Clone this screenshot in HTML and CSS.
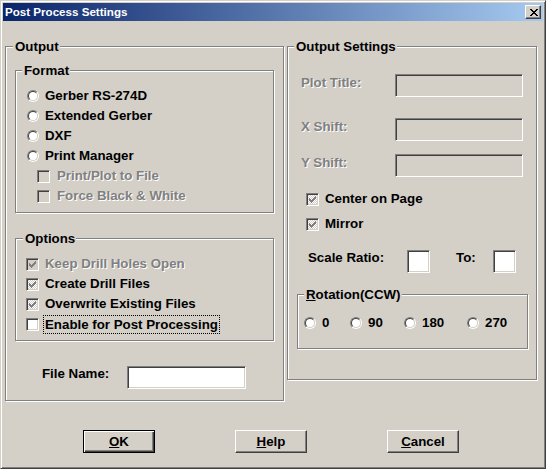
FILE: index.html
```html
<!DOCTYPE html>
<html>
<head>
<meta charset="utf-8">
<title>Post Process Settings</title>
<link rel="stylesheet" href="styles.css">
</head>
<body>
<div class="window">
  <div class="titlebar">
    <span class="title">Post Process Settings</span>
    <span class="close"><svg width="8" height="7" viewBox="0 0 8 7" shape-rendering="crispEdges"><path fill="#000" d="M0 0h2v1H0z M6 0h2v1H6z M1 1h2v1H1z M5 1h2v1H5z M2 2h4v1H2z M3 3h2v1H3z M2 4h4v1H2z M1 5h2v1H1z M5 5h2v1H5z M0 6h2v1H0z M6 6h2v1H6z"/></svg></span>
  </div>
  <div class="content">
    <div class="groups">
      <div class="group output">
        <span class="legend legend-wide">Output</span>
        <div class="group format">
          <span class="legend">Format</span>
          <div class="row"><span class="radio"></span><span>Gerber RS-274D</span></div>
          <div class="row"><span class="radio"></span><span>Extended Gerber</span></div>
          <div class="row"><span class="radio"></span><span>DXF</span></div>
          <div class="row"><span class="radio"></span><span>Print Manager</span></div>
          <div class="row sub"><span class="cb dis"></span><span class="dim">Print/Plot to File</span></div>
          <div class="row sub"><span class="cb dis"></span><span class="dim">Force Black &amp; White</span></div>
        </div>
        <div class="group options">
          <span class="legend legend-wide">Options</span>
          <div class="row"><span class="cb dis"><svg class="check" width="11" height="11" viewBox="0 0 11 11" shape-rendering="crispEdges"><path d="M2 4h1v3H2z M3 5h1v3H3z M4 6h1v3H4z M5 5h1v3H5z M6 4h1v3H6z M7 3h1v3H7z M8 2h1v3H8z"/></svg></span><span class="dim">Keep Drill Holes Open</span></div>
          <div class="row"><span class="cb dither"><svg class="check" width="11" height="11" viewBox="0 0 11 11" shape-rendering="crispEdges"><path d="M2 4h1v3H2z M3 5h1v3H3z M4 6h1v3H4z M5 5h1v3H5z M6 4h1v3H6z M7 3h1v3H7z M8 2h1v3H8z"/></svg></span><span>Create Drill Files</span></div>
          <div class="row"><span class="cb dither"><svg class="check" width="11" height="11" viewBox="0 0 11 11" shape-rendering="crispEdges"><path d="M2 4h1v3H2z M3 5h1v3H3z M4 6h1v3H4z M5 5h1v3H5z M6 4h1v3H6z M7 3h1v3H7z M8 2h1v3H8z"/></svg></span><span>Overwrite Existing Files</span></div>
          <div class="row"><span class="cb"></span><span class="focus">Enable for Post Processing</span></div>
        </div>
        <div class="filerow">
          <span class="flabel">File Name:</span>
          <span class="field filename"></span>
        </div>
      </div>
      <div class="group settings">
        <span class="legend">Output Settings</span>
        <div class="srow">
          <span class="slabel dim">Plot Title:</span>
          <span class="field dis wide"></span>
        </div>
        <div class="srow r2">
          <span class="slabel dim">X Shift:</span>
          <span class="field dis wide"></span>
        </div>
        <div class="srow r3">
          <span class="slabel dim">Y Shift:</span>
          <span class="field dis wide"></span>
        </div>
        <div class="crow c1"><span class="cb dither"><svg class="check" width="11" height="11" viewBox="0 0 11 11" shape-rendering="crispEdges"><path d="M2 4h1v3H2z M3 5h1v3H3z M4 6h1v3H4z M5 5h1v3H5z M6 4h1v3H6z M7 3h1v3H7z M8 2h1v3H8z"/></svg></span><span>Center on Page</span></div>
        <div class="crow c2"><span class="cb dither"><svg class="check" width="11" height="11" viewBox="0 0 11 11" shape-rendering="crispEdges"><path d="M2 4h1v3H2z M3 5h1v3H3z M4 6h1v3H4z M5 5h1v3H5z M6 4h1v3H6z M7 3h1v3H7z M8 2h1v3H8z"/></svg></span><span>Mirror</span></div>
        <div class="scalerow">
          <span class="scalelabel">Scale Ratio:</span>
          <span class="field small"></span>
          <span class="tolabel">To:</span>
          <span class="field small"></span>
        </div>
        <div class="group rotation">
          <span class="legend"><u>R</u>otation(CCW)</span>
          <div class="rgrid">
            <div class="ritem"><span class="radio"></span><span>0</span></div>
            <div class="ritem"><span class="radio"></span><span>90</span></div>
            <div class="ritem"><span class="radio"></span><span>180</span></div>
            <div class="ritem"><span class="radio"></span><span>270</span></div>
          </div>
        </div>
      </div>
    </div>
    <div class="buttons">
      <span class="btn default"><span><u>O</u>K</span></span>
      <span class="btn"><span><u>H</u>elp</span></span>
      <span class="btn"><span><u>C</u>ancel</span></span>
    </div>
  </div>
</div>
</body>
</html>
```
FILE: styles.css
```css
* { box-sizing: border-box; }
html, body { margin: 0; padding: 0; }
body {
  width: 546px;
  height: 469px;
  overflow: hidden;
  background: #d4d0c8;
  font-family: "Liberation Sans", Arial, sans-serif;
  font-weight: bold;
  font-size: 13.3px;
  color: #000;
}
.window {
  width: 546px;
  height: 469px;
  border: 1px solid;
  border-color: #d4d0c8 #404040 #404040 #d4d0c8;
  box-shadow: inset 1px 1px #fff, inset -1px -1px #808080;
  padding: 2px;
  background: #d4d0c8;
  display: flex;
  flex-direction: column;
}
.titlebar {
  height: 18px;
  flex: none;
  background: linear-gradient(to right, #0a246a, #a6caf0);
  display: flex;
  align-items: center;
  justify-content: space-between;
  padding: 0 2px 0 2px;
}
.title {
  color: #fff;
  font-size: 11.6px;
  line-height: 18px;
}
.close {
  width: 16px;
  height: 14px;
  background: #d4d0c8;
  border: 1px solid;
  border-color: #fff #404040 #404040 #fff;
  box-shadow: inset -1px -1px #808080;
  display: flex;
  align-items: center;
  justify-content: center;
  padding-left: 1px;
}
.close svg { display: block; }
.content { padding: 25px 0 0 2px; }
.groups { display: flex; align-items: flex-start; gap: 3px; }
.group {
  position: relative;
  border: 1px solid #808080;
  box-shadow: inset 1px 1px #fff, 1px 1px #fff;
}
.legend {
  position: absolute;
  top: -8px;
  left: 6px;
  padding: 0 1px 0 2px;
  background: #d4d0c8;
  line-height: 16px;
  white-space: nowrap;
}
.legend-wide { left: 7px; }
.output { width: 279px; height: 355px; padding: 23px 0 0 9px; }
.format { width: 259px; height: 143px; padding: 15px 0 0 11px; }
.options { width: 259px; height: 103px; padding: 15px 0 0 10px; margin-top: 25px; }
.row {
  display: flex;
  align-items: center;
  height: 20px;
  line-height: 20px;
  white-space: nowrap;
}
.row .radio { margin-right: 6px; }
.row .cb { margin-right: 6px; }
.row.sub { padding-left: 10px; }
.row.sub .cb { margin-right: 7px; }
.radio {
  position: relative;
  flex: none;
  width: 12px;
  height: 12px;
  border-radius: 50%;
  border: 1px solid;
  border-color: #808080 #fff #fff #808080;
}
.radio::before {
  content: "";
  position: absolute;
  inset: 0;
  border-radius: 50%;
  border: 1px solid;
  border-color: #404040 #d4d0c8 #d4d0c8 #404040;
  background: #fff;
}
.cb {
  flex: none;
  width: 13px;
  height: 13px;
  border: 1px solid;
  border-color: #808080 #fff #fff #808080;
  box-shadow: inset 1px 1px #404040, inset -1px -1px #d4d0c8;
  background: #fff;
}
.cb.dis { background: #d4d0c8; }
.cb.dither {
  background: repeating-conic-gradient(#fff 0 25%, #d4d0c8 0 50%) 0 0 / 2px 2px;
}
.check { display: block; fill: #808080; }
.dim { color: #808080; text-shadow: 1px 1px 0 #fff; }
.focus {
  border: 1px dotted #000;
  padding: 0 1px;
  margin-left: -2px;
  line-height: 17px;
}
.filerow { display: flex; margin: 25px 0 0 27px; }
.flabel { width: 85px; line-height: 16px; }
.field {
  flex: none;
  display: block;
  height: 23px;
  border: 1px solid;
  border-color: #808080 #fff #fff #808080;
  box-shadow: inset 1px 1px #404040, inset -1px -1px #d4d0c8;
  background: #fff;
}
.field.dis { background: #d4d0c8; }
.filename { width: 119px; }
.wide { width: 128px; }
.small { width: 23px; }
.settings { width: 250px; height: 334px; padding: 27px 0 0 9px; }
.srow { display: flex; align-items: flex-start; }
.srow.r2 { margin-top: 21px; }
.srow.r3 { margin-top: 13px; }
.slabel { width: 94px; margin-left: 4px; line-height: 16px; margin-top: 1px; }
.crow {
  display: flex;
  align-items: center;
  height: 20px;
  line-height: 20px;
  padding-left: 9px;
}
.crow .cb { margin-right: 6px; }
.crow.c1 { margin-top: 12px; }
.crow.c2 { margin-top: 5px; }
.scalerow { display: flex; align-items: flex-start; margin-top: 16px; padding-left: 11px; }
.scalelabel { width: 99px; line-height: 16px; }
.tolabel { width: 37px; margin-left: 26px; line-height: 16px; }
.rotation { width: 231px; height: 55px; margin-top: 21px; padding: 18px 0 0 6px; }
.rgrid { display: grid; grid-template-columns: 46px 54px 63px auto; }
.ritem { display: flex; align-items: center; height: 20px; line-height: 20px; }
.ritem .radio { margin-right: 6px; }
.buttons { display: flex; gap: 80px; padding-left: 78px; margin-top: 29px; }
.btn {
  width: 72px;
  height: 23px;
  border: 1px solid;
  border-color: #fff #404040 #404040 #fff;
  box-shadow: inset -1px -1px #808080;
  background: #d4d0c8;
  display: flex;
  align-items: center;
  justify-content: center;
  line-height: 16px;
}
.btn.default {
  border-color: #000;
  box-shadow: inset 1px 1px #fff, inset -1px -1px #404040, inset -2px -2px #808080;
}
```
